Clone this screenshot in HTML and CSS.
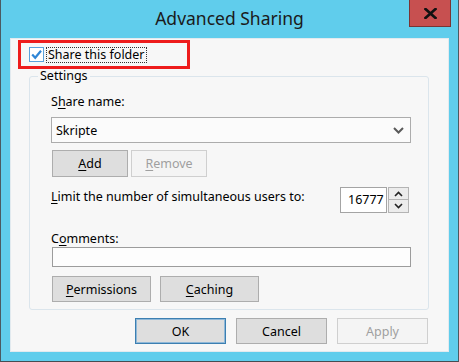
FILE: index.html
```html
<!DOCTYPE html>
<html>
<head>
<meta charset="utf-8">
<link rel="stylesheet" href="styles.css">
</head>
<body>
<div class="window">
  <div class="titlebar">
    <span class="title">Advanced Sharing</span>
    <div class="close">
      <svg width="13" height="11" viewBox="0 0 13 11"><path d="M1.5 1 L11.5 10 M11.5 1 L1.5 10" stroke="#111" stroke-width="2.6" stroke-linecap="square" fill="none"/></svg>
    </div>
  </div>
  <div class="client">
    <div class="highlight">
      <div class="check">
        <span class="box"><svg width="13" height="13" viewBox="0 0 13 13"><path d="M2.2 6.6 L5.2 9.8 L11 2.8" stroke="#2f86d6" stroke-width="2.2" fill="none"/></svg></span>
        <span class="focus">Share this folder</span>
      </div>
    </div>
    <fieldset class="group">
      <legend class="legend">Settings</legend>
      <div class="groupbody">
        <div class="label">S<u>h</u>are name:</div>
        <div class="combo">
          <span class="comboval">Skripte</span>
          <svg width="11" height="7" viewBox="0 0 11 7"><path d="M1 1 L5.5 5.5 L10 1" stroke="#5a5a5a" stroke-width="2" fill="none"/></svg>
        </div>
        <div class="row addrow">
          <div class="btn"><u>A</u>dd</div>
          <div class="btn disabled"><u>R</u>emove</div>
        </div>
        <div class="limit">
          <span class="label limitlabel"><u>L</u>imit the number of simultaneous users to:</span>
          <div class="spinner">
            <div class="spinval">16777</div>
            <div class="spins">
              <div class="spin"><svg width="9" height="6" viewBox="0 0 9 6"><path d="M1 5 L4.5 1.5 L8 5" stroke="#222" stroke-width="1.6" fill="none"/></svg></div>
              <div class="spin"><svg width="9" height="6" viewBox="0 0 9 6"><path d="M1 1 L4.5 4.5 L8 1" stroke="#222" stroke-width="1.6" fill="none"/></svg></div>
            </div>
          </div>
        </div>
        <div class="label comments">C<u>o</u>mments:</div>
        <div class="textbox"></div>
        <div class="row permrow">
          <div class="btn wide"><u>P</u>ermissions</div>
          <div class="btn wide"><u>C</u>aching</div>
        </div>
      </div>
    </fieldset>
    <div class="footer">
      <div class="btn foot default">OK</div>
      <div class="btn foot">Cancel</div>
      <div class="btn foot disabled">Apply</div>
    </div>
  </div>
</div>
</body>
</html>
```

FILE: styles.css
```css
* { box-sizing: border-box; }
html, body { margin: 0; padding: 0; }
body {
  width: 459px;
  height: 362px;
  overflow: hidden;
  font-family: "Noto Sans", "Liberation Sans", sans-serif;
  font-size: 12.5px;
  color: #000;
}
u { text-decoration: underline; text-underline-offset: 2px; }

.window {
  width: 459px;
  height: 362px;
  background: #60cdec;
  border-left: 1px solid #4b5a62;
  border-right: 1px solid #4b5a62;
  border-bottom: 1px solid #454d52;
  padding-bottom: 9px;
}

.titlebar {
  position: relative;
  height: 38px;
  text-align: center;
  padding-top: 7px;
}
.title {
  font-size: 17.5px;
  line-height: 23px;
  color: #1b1b1b;
}
.close {
  position: absolute;
  top: 0;
  right: 7px;
  width: 42px;
  height: 27px;
  background: #c75050;
  border: 1px solid #7a3434;
  border-top: none;
  display: flex;
  align-items: center;
  justify-content: center;
}

.client {
  margin-left: 9px;
  width: 439px;
  background: #f7f7f7;
  border: 1px solid #e2eaef;
  padding-bottom: 7px;
}

.highlight {
  margin: 1px 0 0 7px;
  width: 172px;
  height: 29px;
  border: 3px solid #ee1c1c;
  padding-left: 8px;
  display: flex;
  align-items: center;
}
.check { display: flex; align-items: center; }
.box {
  width: 15px;
  height: 15px;
  border: 1px solid #5aa2dc;
  background: #fff;
  display: flex;
  align-items: center;
  justify-content: center;
}
.focus {
  margin-left: 2px;
  line-height: 14px;
  padding: 0 1px;
  border: 1px dotted #333;
  white-space: nowrap;
}

.group {
  margin: -1px 0 0 18px;
  padding: 0;
  width: 400px;
  min-width: 0;
  border: 1px solid #dbe5ec;
  border-radius: 3px;
}
.legend {
  margin-left: 8px;
  padding: 0 2px;
  line-height: 16px;
}
.groupbody {
  padding: 10px 17px 7px 21px;
}
.label { line-height: 16px; white-space: nowrap; }

.combo {
  margin-top: 7px;
  height: 26px;
  border: 1px solid #acacac;
  background: #fbfbfb;
  display: flex;
  align-items: center;
  justify-content: space-between;
  padding: 0 6px 0 4px;
}

.row { display: flex; }
.addrow { margin-top: 7px; margin-left: 1px; gap: 3px; }
.btn {
  width: 76px;
  height: 27px;
  border: 1px solid #adadad;
  background: #dedede;
  display: flex;
  align-items: center;
  justify-content: center;
}
.btn.disabled {
  background: #f4f4f4;
  border-color: #cfcfcf;
  color: #9f9f9f;
}

.limit {
  margin-top: 10px;
  display: flex;
  justify-content: space-between;
  padding-right: 2px;
}
.limitlabel { margin-top: 2px; }
.spinner { display: flex; gap: 1px; }
.spinval {
  width: 47px;
  height: 26px;
  border: 1px solid #a4a4a4;
  background: #fff;
  padding-left: 7px;
  line-height: 24px;
  overflow: hidden;
  white-space: nowrap;
}
.spins { display: flex; flex-direction: column; }
.spin {
  width: 21px;
  height: 13px;
  border: 1px solid #b4b4b4;
  background: #ececec;
  display: flex;
  align-items: center;
  justify-content: center;
}
.spin + .spin { border-top: none; }

.comments { margin-top: 18px; }
.textbox {
  margin-left: 1px;
  height: 20px;
  border: 1px solid #9c9c9c;
  background: #fdfdfd;
}
.permrow { margin-top: 9px; margin-left: 1px; gap: 9px; }
.btn.wide { width: 99px; height: 26px; }

.footer {
  margin-top: 8px;
  display: flex;
  justify-content: flex-end;
  gap: 10px;
  padding-right: 20px;
}
.btn.foot { width: 91px; height: 26px; }
.btn.default {
  border-color: #3c7fb1;
  box-shadow: inset 0 0 0 1px #8fb8d8;
}
```
